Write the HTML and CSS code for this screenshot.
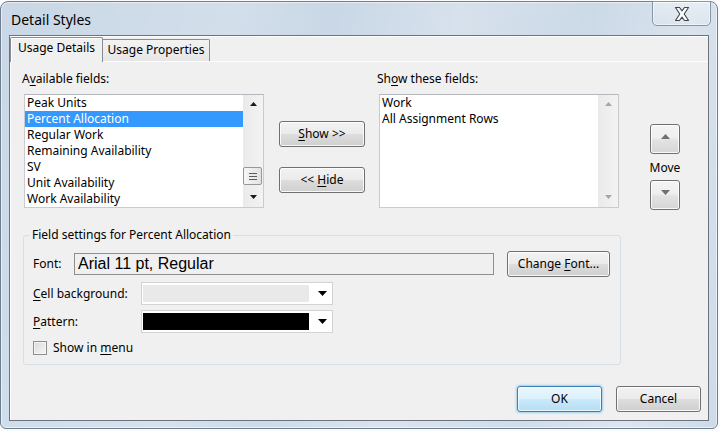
FILE: index.html
```html
<!DOCTYPE html>
<html>
<head>
<meta charset="utf-8">
<title>Detail Styles</title>
<link rel="stylesheet" href="styles.css">
</head>
<body>
<div class="window">
  <div class="titlebar">
    <span class="title">Detail Styles</span>
    <button class="close" aria-label="Close">
      <svg width="16" height="14" viewBox="0 0 16 14"><path d="M1.5 0.5 H5.5 L8 3.8 L10.5 0.5 H14.5 L10.2 7 L14.5 13.5 H10.5 L8 10.2 L5.5 13.5 H1.5 L5.8 7 Z" fill="#fff" stroke="#3e444b" stroke-width="1.1" stroke-linejoin="round"/></svg>
    </button>
  </div>
  <div class="client">
    <div class="tabs">
      <div class="tab active">Usage Details</div>
      <div class="tab inactive">Usage Properties</div>
    </div>
    <div class="panel">
      <div class="top">
        <div class="col">
          <div class="label">A<u>v</u>ailable fields:</div>
          <div class="listbox">
            <ul class="items">
              <li>Peak Units</li>
              <li class="sel">Percent Allocation</li>
              <li>Regular Work</li>
              <li>Remaining Availability</li>
              <li>SV</li>
              <li>Unit Availability</li>
              <li>Work Availability</li>
            </ul>
            <div class="vscroll">
              <span class="sarrow"><svg width="7" height="4" viewBox="0 0 7 4"><path d="M3.5 0 L7 4 H0 Z" fill="#1a1a1a"/></svg></span>
              <span class="thumb"></span>
              <span class="sarrow down"><svg width="7" height="4" viewBox="0 0 7 4"><path d="M0 0 H7 L3.5 4 Z" fill="#1a1a1a"/></svg></span>
            </div>
          </div>
        </div>
        <div class="mid">
          <button class="btn mbig"><u>S</u>how &gt;&gt;</button>
          <button class="btn mbig">&lt;&lt; <u>H</u>ide</button>
        </div>
        <div class="col right">
          <div class="label">Sh<u>o</u>w these fields:</div>
          <div class="listbox">
            <ul class="items">
              <li>Work</li>
              <li>All Assignment Rows</li>
            </ul>
            <div class="vscroll">
              <span class="sarrow"><svg width="7" height="4" viewBox="0 0 7 4"><path d="M3.5 0 L7 4 H0 Z" fill="#a6a6a6"/></svg></span>
              <span class="sarrow down"><svg width="7" height="4" viewBox="0 0 7 4"><path d="M0 0 H7 L3.5 4 Z" fill="#a6a6a6"/></svg></span>
            </div>
          </div>
        </div>
        <div class="move">
          <button class="btn mv"><svg width="9" height="5" viewBox="0 0 9 5"><path d="M4.5 0 L9 5 H0 Z" fill="#707070"/></svg></button>
          <div class="move-label">Move</div>
          <button class="btn mv"><svg width="9" height="5" viewBox="0 0 9 5"><path d="M0 0 H9 L4.5 5 Z" fill="#707070"/></svg></button>
        </div>
      </div>

      <fieldset class="group">
        <legend>Field settings for Percent Allocation</legend>
        <div class="row row-font">
          <span class="flabel">Font:</span>
          <div class="fontbox">Arial 11 pt, Regular</div>
          <button class="btn change">Change <u>F</u>ont...</button>
        </div>
        <div class="row row-combo">
          <span class="clabel"><u>C</u>ell background:</span>
          <div class="combo">
            <span class="swatch light"></span>
            <span class="drop"><svg width="9" height="5" viewBox="0 0 9 5"><path d="M0 0 H9 L4.5 5 Z" fill="#000"/></svg></span>
          </div>
        </div>
        <div class="row row-combo">
          <span class="clabel"><u>P</u>attern:</span>
          <div class="combo">
            <span class="swatch dark"></span>
            <span class="drop"><svg width="9" height="5" viewBox="0 0 9 5"><path d="M0 0 H9 L4.5 5 Z" fill="#000"/></svg></span>
          </div>
        </div>
        <div class="row row-check">
          <span class="check"></span>
          <span>Show in <u>m</u>enu</span>
        </div>
      </fieldset>

      <div class="footer">
        <button class="btn ok">OK</button>
        <button class="btn cancel">Cancel</button>
      </div>
    </div>
  </div>
</div>
</body>
</html>
```

FILE: styles.css
```css
body {
  margin: 0;
  width: 720px;
  height: 431px;
  overflow: hidden;
  background: #fbfcfd;
  font-family: "Noto Sans", sans-serif;
  font-size: 12px;
  line-height: 16px;
  color: #000;
}

u { text-decoration: underline; text-underline-offset: 2px; }

.window {
  margin-top: 1px;
  width: 718px;
  height: 428px;
  box-sizing: border-box;
  border: 1px solid #6f7e8e;
  border-radius: 8px 8px 6px 6px;
  background:
    linear-gradient(100deg, rgba(255,255,255,0) 0%, rgba(255,255,255,0.18) 30%, rgba(255,255,255,0) 42%, rgba(255,255,255,0.25) 58%, rgba(255,255,255,0.05) 75%, rgba(255,255,255,0.3) 88%, rgba(255,255,255,0) 100%),
    linear-gradient(#c9d7e6, #cddbea);
  box-shadow: inset 0 0 0 1px rgba(255,255,255,0.55);
  display: flex;
  flex-direction: column;
}

.titlebar {
  height: 33px;
  flex: none;
  display: flex;
  justify-content: space-between;
  align-items: flex-start;
}

.title {
  padding: 9px 0 0 10px;
  font-size: 14px;
  line-height: 18px;
  color: #000;
}

.close {
  margin: -1px 6px 0 0;
  width: 59px;
  height: 25px;
  box-sizing: border-box;
  padding: 0;
  border: 1px solid #8795a5;
  border-radius: 0 0 5px 5px;
  background: linear-gradient(rgba(255,255,255,0.35), rgba(255,255,255,0.12));
  box-shadow: inset 0 0 0 1px rgba(255,255,255,0.5);
  display: flex;
  align-items: center;
  justify-content: center;
}

.client {
  flex: 1;
  margin: 0 8px 7px 8px;
  border: 1px solid #6d737a;
  background: #f0f0f0;
  box-shadow: inset 1px 1px 0 #ffffff;
  display: flex;
  flex-direction: column;
}

.tabs {
  display: flex;
  align-items: flex-start;
  margin-top: 1px;
  height: 24px;
  flex: none;
  position: relative;
  z-index: 1;
}

.tab {
  box-sizing: border-box;
  border: 1px solid #898c95;
  border-bottom: none;
  text-align: center;
  white-space: nowrap;
  padding-top: 2px;
}

.tab.active {
  width: 93px;
  height: 25px;
  background: #f0f0f0;
  border-radius: 2px 2px 0 0;
  box-shadow: inset 1px 1px 0 #fff;
}

.tab.inactive {
  width: 107px;
  height: 22px;
  margin-top: 2px;
  border-left: none;
  background: linear-gradient(#f3f3f3, #e6e6e6);
  border-radius: 0 2px 0 0;
}

.panel {
  flex: 1;
  border-top: 1px solid #fdfdfd;
  display: flex;
  flex-direction: column;
}

.top {
  display: flex;
  align-items: flex-start;
  padding: 9px 0 0 14px;
}

.col { width: 240px; }

.label {
  margin-left: -2px;
  margin-bottom: 7px;
  height: 16px;
  white-space: nowrap;
}

.listbox {
  height: 114px;
  box-sizing: border-box;
  border: 1px solid #c9cbcf;
  border-top-color: #b4b7bc;
  background: #fff;
  display: flex;
}

.items {
  flex: 1;
  margin: 0;
  padding: 0;
  list-style: none;
}

.items li {
  height: 16px;
  padding-left: 2px;
  white-space: nowrap;
}

.items li.sel {
  background: #3399ff;
  color: #fff;
}

.vscroll {
  width: 20px;
  background: linear-gradient(90deg, #eaeaea, #f3f3f3);
  display: flex;
  flex-direction: column;
  align-items: stretch;
}

.sarrow {
  height: 17px;
  display: flex;
  align-items: center;
  justify-content: center;
}

.sarrow.down {
  margin-top: auto;
  margin-bottom: 2px;
}

.thumb {
  margin-top: 55px;
  height: 18px;
  width: 19px;
  box-sizing: border-box;
  border: 1px solid #979797;
  border-radius: 2px;
  background: linear-gradient(90deg, #f6f6f6, #e2e2e2);
  display: flex;
  align-items: center;
  justify-content: center;
}

.thumb::before {
  content: "";
  width: 8px;
  height: 1px;
  margin-top: -6px;
  background: #5c5c5c;
  box-shadow: 0 3px 0 #5c5c5c, 0 6px 0 #5c5c5c;
}

.mid {
  margin-left: 15px;
  width: 86px;
  padding-top: 50px;
  display: flex;
  flex-direction: column;
  gap: 20px;
}

.right { margin-left: 14px; }

.btn {
  font: inherit;
  color: #000;
  padding: 0;
  box-sizing: border-box;
  border: 1px solid #707070;
  border-radius: 3px;
  background: linear-gradient(#f2f2f2 0%, #ebebeb 48%, #dddddd 52%, #cfcfcf 100%);
  box-shadow: inset 0 0 0 1px rgba(255,255,255,0.85);
  white-space: nowrap;
}

.mbig {
  width: 86px;
  height: 26px;
}

.move {
  margin-left: 31px;
  width: 30px;
  padding-top: 53px;
  display: flex;
  flex-direction: column;
  align-items: center;
}

.mv {
  width: 30px;
  height: 30px;
  display: flex;
  align-items: flex-start;
  justify-content: center;
  padding-top: 9px;
  background: linear-gradient(#f4f4f4 0%, #efefef 45%, #e2e2e2 55%, #d6d6d6 100%);
}

.move-label {
  margin: 6px 0 4px;
}

.group {
  margin: 17px 0 0 13px;
  width: 598px;
  box-sizing: border-box;
  padding: 8px 0 6px 9px;
  border: 1px solid #d5dfe5;
  border-radius: 3px;
  min-width: 0;
}

.group legend {
  padding: 0 2px;
  margin-left: -3px;
  line-height: 16px;
}

.row {
  display: flex;
  align-items: center;
}

.row-font { height: 26px; }

.flabel { width: 41px; }

.fontbox {
  width: 420px;
  height: 22px;
  box-sizing: border-box;
  border: 1px solid #8e8f8f;
  background: #f0f0f0;
  font-family: "Liberation Sans", Arial, sans-serif;
  font-size: 16px;
  line-height: 20px;
  padding-left: 3px;
  white-space: nowrap;
}

.change {
  margin-left: 13px;
  width: 103px;
  height: 26px;
}

.row-combo {
  height: 23px;
  margin-top: 5px;
}

.clabel { width: 108px; white-space: nowrap; }

.combo {
  width: 192px;
  height: 23px;
  box-sizing: border-box;
  border: 1px solid #d3d3d3;
  background: #fff;
  display: flex;
  padding: 2px 0 2px 1px;
}

.swatch { width: 166px; }
.swatch.light { background: #e9e9e9; }
.swatch.dark { background: #000; }

.drop {
  flex: 1;
  display: flex;
  align-items: center;
  justify-content: center;
  padding-left: 4px;
}

.row-check {
  height: 20px;
  margin-top: 5px;
}

.check {
  width: 14px;
  height: 14px;
  box-sizing: border-box;
  border: 1px solid #8f8f8f;
  background: linear-gradient(135deg, #dadada, #f7f7f7);
  box-shadow: inset 0 0 0 1px #f4f4f4;
  margin-right: 6px;
}

.footer {
  display: flex;
  justify-content: flex-end;
  gap: 14px;
  margin-top: 21px;
  padding-right: 7px;
}

.ok, .cancel {
  width: 85px;
  height: 26px;
}

.ok {
  border-color: #3c7fb1;
  background: linear-gradient(#eaf6fd 0%, #dcf1fc 48%, #c9e9fa 52%, #b5ddf4 100%);
  box-shadow: inset 0 0 0 1px rgba(255,255,255,0.7), 0 0 2px 1px rgba(90,180,235,0.55);
}
```
